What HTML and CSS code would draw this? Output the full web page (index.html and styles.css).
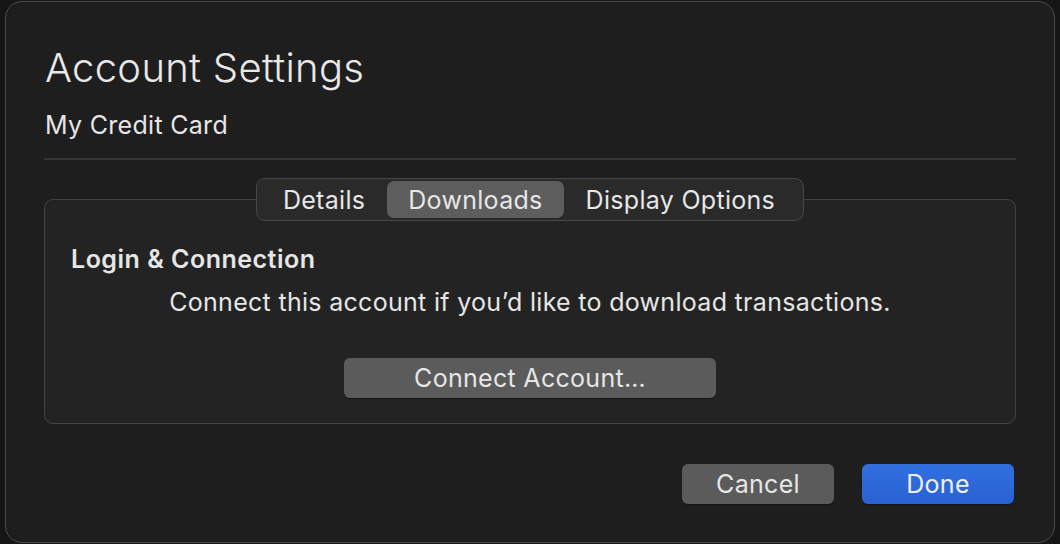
FILE: index.html
```html
<!DOCTYPE html>
<html>
<head>
<meta charset="utf-8">
<link rel="stylesheet" href="styles.css">
</head>
<body>
<div class="window">
  <h1 class="title">Account Settings</h1>
  <div class="subtitle">My Credit Card</div>
  <div class="separator"></div>
  <div class="tabs-area">
    <div class="segmented">
      <div class="seg first">Details</div>
      <div class="seg selected">Downloads</div>
      <div class="seg last">Display Options</div>
    </div>
    <div class="group">
      <div class="group-title">Login &amp; Connection</div>
      <div class="group-text">Connect this account if you’d like to download transactions.</div>
      <div class="center-row"><button class="btn connect">Connect Account…</button></div>
    </div>
  </div>
  <div class="footer">
    <button class="btn cancel">Cancel</button>
    <button class="btn done">Done</button>
  </div>
</div>
</body>
</html>
```

FILE: styles.css
```css
html, body {
  margin: 0;
  padding: 0;
  background: #161616;
  width: 1060px;
  height: 544px;
  overflow: hidden;
  font-family: Inter, "Noto Sans", sans-serif;
  color: #e6e6e6;
}
.window {
  box-sizing: border-box;
  margin: 1px 5px 0 5px;
  height: 542px;
  border: 1.5px solid #4a4a4a;
  border-radius: 17px;
  background: #1e1e1e;
  padding: 0 38px 0 38px;
  display: flex;
  flex-direction: column;
}
.title {
  margin: 42px 0 0 1px;
  font-size: 40px;
  font-weight: 300;
  line-height: 48px;
  letter-spacing: 0.3px;
  color: #e8e8e8;
}
.subtitle {
  margin: 18px 0 0 1px;
  font-size: 25px;
  line-height: 30px;
  letter-spacing: 0.3px;
  color: #e6e6e6;
}
.separator {
  margin-top: 18px;
  height: 2px;
  background: #363636;
}
.tabs-area {
  margin-top: 18px;
  display: flex;
  flex-direction: column;
  align-items: center;
}
.segmented {
  position: relative;
  z-index: 1;
  display: flex;
  box-sizing: border-box;
  height: 43px;
  padding: 2px;
  border: 1px solid #474747;
  border-radius: 9px;
  background: #2a2a2a;
  margin-bottom: -22px;
}
.seg {
  font-size: 25px;
  letter-spacing: 0.3px;
  line-height: 39px;
  padding: 0 22px;
  border-radius: 7px;
  color: #e6e6e6;
}
.seg.first {
  padding-left: 24px;
}
.seg.last {
  padding-right: 26px;
}
.seg.selected {
  padding: 0 21px;
  background: #5d5d5d;
}
.group {
  align-self: stretch;
  box-sizing: border-box;
  height: 225px;
  border: 1.5px solid #434343;
  border-radius: 9px;
  background: #232323;
  padding: 44px 26px 0 26px;
}
.group-title {
  font-size: 25px;
  font-weight: 600;
  letter-spacing: 0.5px;
  line-height: 30px;
  color: #e6e6e6;
}
.group-text {
  margin-top: 13px;
  font-size: 25px;
  letter-spacing: 0.3px;
  line-height: 30px;
  text-align: center;
  color: #e6e6e6;
}
.center-row {
  display: flex;
  justify-content: center;
  margin-top: 41px;
}
.btn {
  font-family: inherit;
  font-size: 25px;
  letter-spacing: 0.3px;
  color: #e6e6e6;
  border: none;
  border-radius: 6px;
  height: 40px;
  padding: 0;
  background: #5b5b5b;
  box-shadow: 0 1px 1px rgba(0,0,0,0.35);
}
.connect {
  width: 372px;
}
.footer {
  margin-top: 40px;
  margin-right: 2px;
  display: flex;
  justify-content: flex-end;
  gap: 28px;
}
.cancel, .done {
  width: 152px;
}
.done {
  background: linear-gradient(#3170e0, #2a61d2);
  color: #f0f0f0;
}
```
